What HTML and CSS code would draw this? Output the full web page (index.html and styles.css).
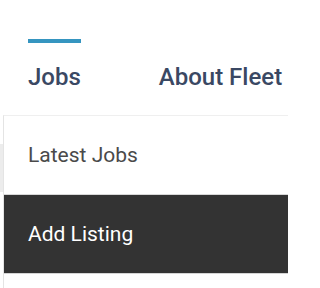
FILE: index.html
```html
<!DOCTYPE html>
<html>
<head>
<meta charset="utf-8">
<link rel="stylesheet" href="styles.css">
</head>
<body>
<div class="page">
  <div class="backdrop"></div>
  <nav class="nav">
    <a class="nav-item active">Jobs</a>
    <a class="nav-item">About Fleet</a>
  </nav>
  <ul class="menu">
    <li class="menu-item">Latest Jobs</li>
    <li class="menu-item selected">Add Listing</li>
    <li class="menu-item"></li>
  </ul>
</div>
</body>
</html>
```
FILE: styles.css
```css
html, body {
  margin: 0;
  padding: 0;
  background: #ffffff;
}
.page {
  position: relative;
  width: 288px;
  height: 288px;
  overflow: hidden;
  font-family: Roboto, "Liberation Sans", sans-serif;
}
.backdrop {
  position: absolute;
  left: 0;
  top: 144px;
  width: 4px;
  height: 48px;
  background: #ececec;
}
.nav {
  display: flex;
  gap: 78px;
  padding: 39px 0 0 28px;
}
.nav-item {
  display: block;
  font-size: 24px;
  font-weight: 500;
  color: #3a4863;
  padding-top: 22px;
  line-height: 33px;
  white-space: nowrap;
}
.nav-item.active {
  border-top: 4px solid #3595c0;
  padding-top: 18px;
}
.menu {
  position: absolute;
  left: 3px;
  top: 115px;
  width: 300px;
  margin: 0;
  padding: 0;
  list-style: none;
  background: #ffffff;
  border-top: 1px solid #efefef;
  border-left: 1px solid #e4e4e4;
}
.menu-item {
  height: 78px;
  line-height: 78px;
  padding-left: 24px;
  font-size: 21px;
  font-weight: 400;
  color: #4a4a4a;
  border-bottom: 1px solid #ffffff;
}
.menu-item.selected {
  background: #333333;
  color: #ffffff;
  border-top: 1px solid #d8d8d8;
  border-bottom: 1px solid #d4d4d4;
  margin-top: -1px;
}
```
